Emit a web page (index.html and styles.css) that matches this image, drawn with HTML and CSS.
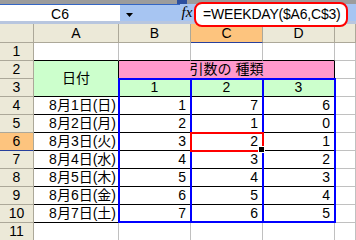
FILE: index.html
```html
<!DOCTYPE html>
<html lang="ja">
<head>
<meta charset="utf-8">
<title>WEEKDAY</title>
<link rel="stylesheet" href="styles.css">
</head>
<body>
<div class="toolbar-edge"><span class="toolbar-grip"></span></div>
<div class="formula-bar">
  <div class="name-group">
    <div class="name-box">C6</div>
    <div class="name-drop"><svg width="7" height="4" viewBox="0 0 7 4"><path d="M0 0H7L3.5 4Z" fill="#000"/></svg></div>
  </div>
  <div class="fx">fx</div>
  <div class="formula">=WEEKDAY($A6,C$3)</div>
</div>
<div class="grid">
  <div class="hd"></div>
  <div class="hd">A</div>
  <div class="hd">B</div>
  <div class="hd sel">C</div>
  <div class="hd">D</div>
  <div class="hd"></div>

  <div class="hd">1</div>
  <div class="edge"></div><div class="edge"></div><div class="edge"></div><div class="edge"></div><div></div>

  <div class="hd">2</div>
  <div class="t green ctr tall">日付</div>
  <div class="t pink ctr wide">引数の 種類</div>
  <div></div>

  <div class="hd">3</div>
  <div class="t green ctr">1</div><div class="t green ctr">2</div><div class="t green ctr">3</div>
  <div></div>

  <div class="hd">4</div>
  <div class="t date">8月1日(日)</div><div class="t num">1</div><div class="t num">7</div><div class="t num">6</div><div></div>
  <div class="hd">5</div>
  <div class="t date">8月2日(月)</div><div class="t num">2</div><div class="t num">1</div><div class="t num">0</div><div></div>
  <div class="hd sel">6</div>
  <div class="t date">8月3日(火)</div><div class="t num">3</div><div class="t num">2</div><div class="t num">1</div><div></div>
  <div class="hd">7</div>
  <div class="t date">8月4日(水)</div><div class="t num">4</div><div class="t num">3</div><div class="t num">2</div><div></div>
  <div class="hd">8</div>
  <div class="t date">8月5日(木)</div><div class="t num">5</div><div class="t num">4</div><div class="t num">3</div><div></div>
  <div class="hd">9</div>
  <div class="t date">8月6日(金)</div><div class="t num">6</div><div class="t num">5</div><div class="t num">4</div><div></div>
  <div class="hd">10</div>
  <div class="t date">8月7日(土)</div><div class="t num">7</div><div class="t num">6</div><div class="t num">5</div><div></div>

  <div class="hd">11</div>
  <div></div><div></div><div></div><div></div><div></div>

  <!-- coloured range outlines and the active-cell cursor -->
  <div class="range col-b"></div>
  <div class="range col-c"></div>
  <div class="range col-d"></div>
  <div class="cursor"></div>
</div>
</body>
</html>
```

FILE: styles.css
```css
* {
  box-sizing: border-box;
}

html,
body {
  margin: 0;
  padding: 0;
}

body {
  width: 356px;
  height: 240px;
  overflow: hidden;
  background: #fff;
  color: #000;
  font-family: "Liberation Sans", "Noto Sans CJK JP", sans-serif;
  font-size: 14px;
}

/* strip of the toolbar above the formula bar */
.toolbar-edge {
  display: flex;
  height: 4px;
  background: #9c9c9c;
}

.toolbar-grip {
  width: 10px;
  margin-left: 177px;
  background: #2d4f9e;
}

/* name box + formula bar */
.formula-bar {
  display: flex;
  height: 20px;
  background: #a7c5f2;
  border-bottom: 3px solid #b8c6df;
}

.name-group {
  display: flex;
  width: 180px;
  border-top: 1px solid #3466c4;
}

.name-box {
  width: 120px;
  background: #fff;
  text-align: center;
  padding-top: 2px;
  line-height: 14px;
}

.name-drop {
  flex: 1;
  display: flex;
  align-items: flex-start;
  padding: 8px 0 0 6px;
}

.name-drop svg {
  display: block;
}

.fx {
  width: 14px;
  font-family: "Liberation Serif", serif;
  font-style: italic;
  font-size: 15px;
  line-height: 17px;
  text-align: center;
}

.formula {
  position: relative;
  z-index: 2;
  align-self: flex-start;
  width: 154px;
  height: 25px;
  margin-top: -2px;
  padding-left: 7px;
  border: 2px solid #f00;
  border-radius: 8px;
  background: #fff;
  font-size: 14px;
  letter-spacing: -0.2px;
  line-height: 21px;
  white-space: nowrap;
}

/* worksheet */
.grid {
  position: relative;
  display: grid;
  grid-template-columns: 34px 85px 72px 72px 72px 1fr;
  grid-template-rows: 19px repeat(11, 18px);
}

.grid > div {
  border-right: 1px solid #c0c0c0;
  border-bottom: 1px solid #c0c0c0;
  line-height: 17px;
  white-space: nowrap;
  overflow: hidden;
}

.grid > .hd {
  background: #ece9d8;
  border-color: #aca899;
  text-align: center;
}

.grid > .hd:nth-child(-n+6) {
  line-height: 18px;
}

.grid > .hd.sel {
  background: #fdc47e;
  border-bottom-color: #27409c;
}

.grid > .edge {
  border-bottom-color: #000;
}

.grid > .t {
  border-color: #000;
}

.green {
  background: #ccffcc;
}

.pink {
  background: #ff99cc;
}

.ctr {
  text-align: center;
}

.tall {
  grid-row: span 2;
  display: flex;
  align-items: center;
  justify-content: center;
}

.wide {
  grid-column: span 3;
}

.num {
  text-align: right;
  padding-right: 4px;
}

.date {
  text-align: right;
  padding-right: 2px;
}

.grid > .range {
  position: absolute;
  top: -1px;
  left: -1px;
  right: -1px;
  bottom: 0;
  grid-row: 4 / 12;
  border: 2px solid #00f;
  overflow: visible;
}

.grid > .col-b {
  grid-column: 3 / 4;
}

.grid > .col-c {
  grid-column: 4 / 5;
}

.grid > .col-d {
  grid-column: 5 / 6;
}

.grid > .cursor {
  position: absolute;
  z-index: 1;
  top: -1px;
  left: -1px;
  right: -1px;
  bottom: -1px;
  grid-column: 4 / 5;
  grid-row: 7 / 8;
  border: 2px solid #f00;
  overflow: visible;
}

/* fill handle at the cursor's lower-right corner */
.cursor::after {
  content: "";
  position: absolute;
  right: -3px;
  bottom: -3px;
  width: 5px;
  height: 5px;
  background: #000;
  border: 1px solid #fff;
}
```
